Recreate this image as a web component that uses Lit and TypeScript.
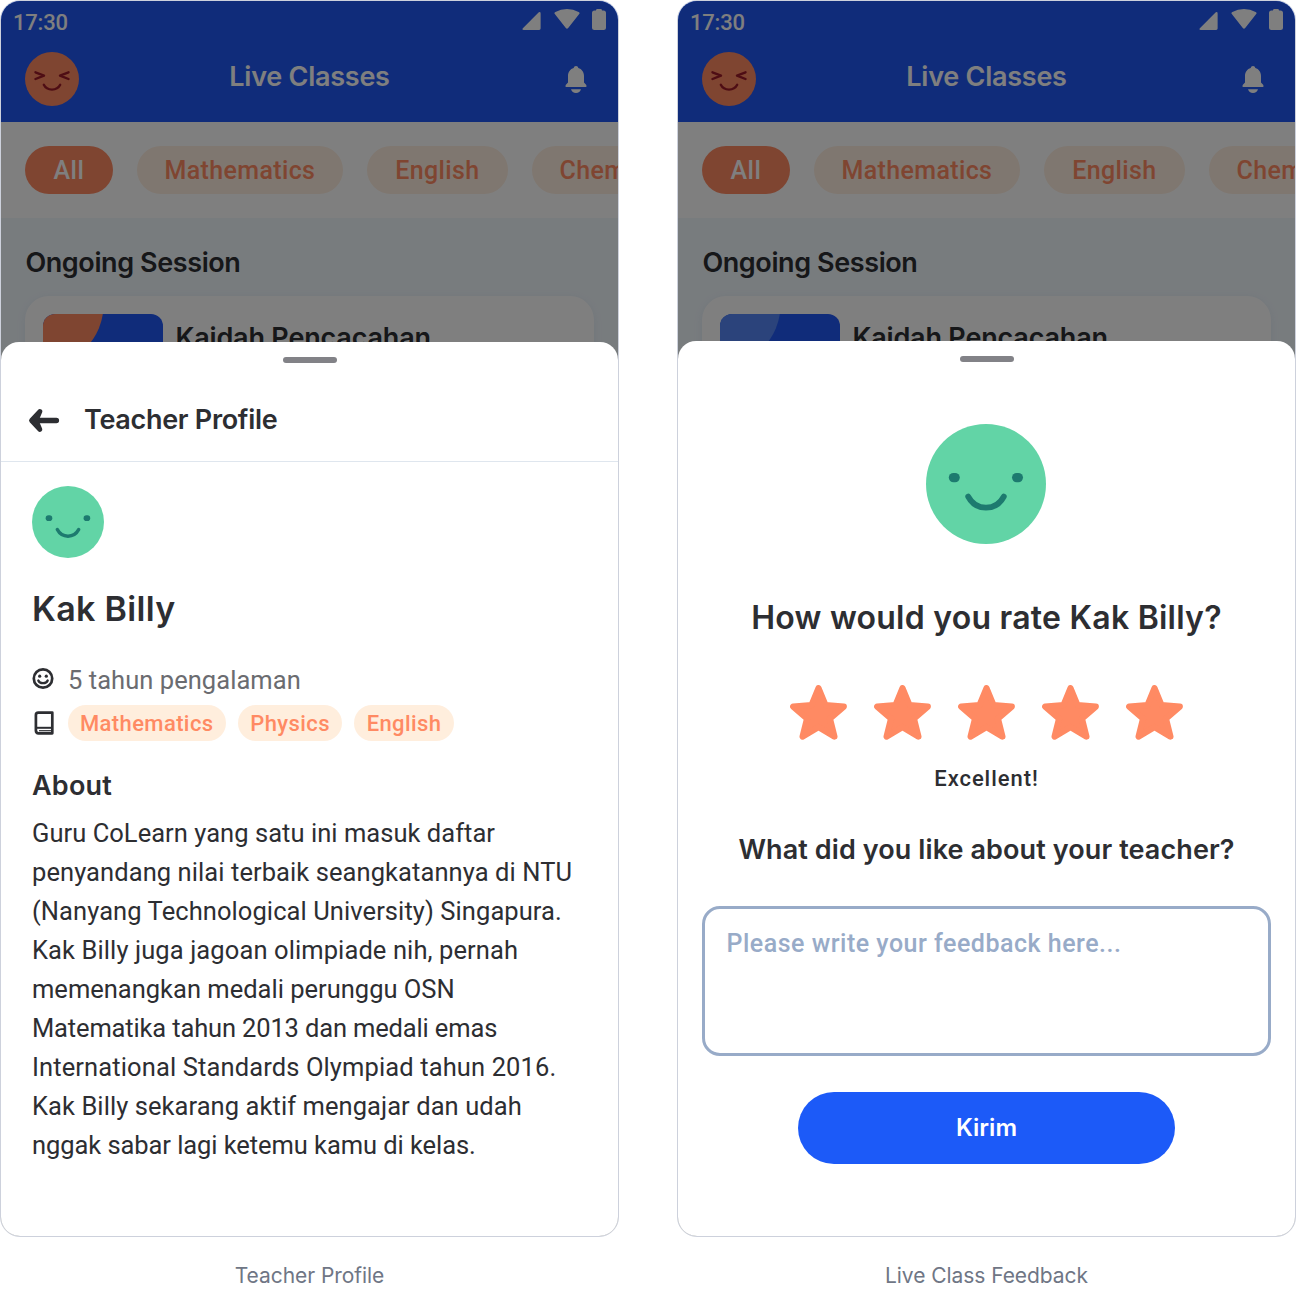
import { LitElement, html, css } from "lit";
import { customElement, property } from "lit/decorators.js";
import { classMap } from "lit/directives/class-map.js";
import { styleMap } from "lit/directives/style-map.js";

const happyFace = html`<svg class="face" viewBox="0 0 120 120">
  <circle cx="60" cy="60" r="60" fill="#62d4a6" />
  <rect x="22.8" y="48.9" width="11" height="9.4" rx="4.7" fill="#1d7a6f" />
  <rect x="86" y="48.9" width="11" height="9.4" rx="4.7" fill="#1d7a6f" />
  <path d="M42.2 72.6C50 87.4 70 87.4 77.8 72.6" fill="none" stroke="#1d7a6f" stroke-width="5.8" stroke-linecap="round" />
</svg>`;

const star = html`<svg class="star" viewBox="0 0 57 55">
  <path d="M28.5 3.2L35.5 20.1L53.8 21.6L39.9 33.6L44.4 51.6L28.5 42L12.6 51.6L17.1 33.6L3.2 21.6L21.5 20.1Z"
    fill="#ff8a63" stroke="#ff8a63" stroke-width="6.2" stroke-linejoin="round" />
</svg>`;

/** The dimmed class list that lies under both sheets. */
@customElement("class-list")
export class ClassList extends LitElement {
  @property() accent = "orange";

  static styles = css`
    :host { display: block; height: 100%; background: #f1f8fd; color: #2d2e32; font-family: Inter, sans-serif; }
    svg { display: block; }
    .top { background: #2058f4; color: #fff; height: 120.5px; }
    .status { height: 43px; display: flex; justify-content: space-between; padding: 0 12px; box-sizing: border-box; }
    .time { font: 500 22px/43px Roboto, sans-serif; letter-spacing: -0.2px; }
    .signals { display: flex; gap: 12.5px; margin-top: 8.4px; }
    .bar { display: grid; grid-template-columns: 1fr auto 1fr; align-items: start; padding: 0 24.4px; }
    .avatar { width: 54px; height: 54px; margin-top: 8.4px; }
    .heading { font-size: 27px; line-height: 34px; font-weight: 600; letter-spacing: -0.25px; margin-top: 16px; }
    .bell { justify-self: end; margin: 22px 7px 0 0; }
    .filters { display: flex; gap: 24px; padding: 24px 24.4px; background: #fff; overflow: hidden; }
    .pill {
      flex: none; height: 48px; border-radius: 24px; padding: 0 28px; background: #ffeee0; color: #ff8a63;
      font: 500 25px/49px Roboto, sans-serif; letter-spacing: 0.36px;
    }
    .pill.on { background: #ff8a63; color: #fff; letter-spacing: 0.6px; }
    .session { padding: 28.5px 24.4px 0; }
    .label { font-size: 27px; line-height: 34px; font-weight: 600; letter-spacing: -0.4px; }
    .card {
      display: flex; gap: 12px; margin-top: 15.5px; padding: 18px; height: 160px; border-radius: 24px;
      background: #fff; box-shadow: 0 2px 8px rgba(120, 150, 190, 0.12);
    }
    .thumb { width: 120px; height: 120px; border-radius: 12px; overflow: hidden; background: #2058f4; }
    .title { font-size: 27px; line-height: 34px; font-weight: 600; letter-spacing: -0.18px; margin-top: 7px; }
  `;

  render() {
    const pills = ["All", "Mathematics", "English", "Chemistry"];
    return html`
      <div class="top">
        <div class="status">
          <span class="time">17:30</span>
          <div class="signals">
            <svg width="19" height="22" viewBox="0 0 19 22"><path d="M16.8 3.2Q18.6 2.4 18.6 4.4V19.6Q18.6 21 17.2 21H1.8Q-.4 21 .9 19.2Z" fill="#fff" /></svg>
            <svg width="26" height="22" viewBox="0 0 26 22"><path d="M1 5.2Q-.3 4 1.4 3.1Q6.7 0 13 0T24.6 3.1Q26.3 4 25 5.2L14.2 19Q13 20.4 11.8 19Z" fill="#fff" /></svg>
            <svg width="14" height="22" viewBox="0 0 14 22"><path d="M4 1.4Q4 0 5.4 0H8.6Q10 0 10 1.4H11.5Q14 1.4 14 3.9V18.5Q14 21 11.5 21H2.5Q0 21 0 18.5V3.9Q0 1.4 2.5 1.4Z" fill="#fff" /></svg>
          </div>
        </div>
        <div class="bar">
          <svg class="avatar" viewBox="0 0 54 54">
            <circle cx="27" cy="27" r="27" fill="#ff8a63" />
            <g fill="none" stroke="#9c1a28" stroke-width="2.4" stroke-linecap="round" stroke-linejoin="round">
              <path d="M10.5 20.3L19 23.6L10.5 27M43.5 20.3L35 23.6L43.5 27" />
              <path d="M18.8 32.8C22 39.2 32 39.2 35.2 32.8" />
            </g>
          </svg>
          <span class="heading">Live Classes</span>
          <svg class="bell" width="22" height="28" viewBox="0 0 22 28">
            <path d="M11 0C12.3 0 13.1 .9 13.3 2C16.8 3 19 6 19 10V16.5L21.3 19Q22 21 21 21H1Q0 21 .7 19L3 16.5V10C3 6 5.2 3 8.7 2C8.9 .9 9.7 0 11 0ZM6 23.2H16C15.4 25.6 13.5 27 11 27S6.6 25.6 6 23.2Z" fill="#fff" />
          </svg>
        </div>
      </div>
      <div class="filters">
        ${pills.map((name, i) => html`<span class=${classMap({ pill: true, on: i === 0 })}>${name}</span>`)}
      </div>
      <div class="session">
        <div class="label">Ongoing Session</div>
        <div class="card">
          <svg class="thumb" viewBox="0 0 120 120">
            <circle cx="0" cy="-9" r="60.5" fill=${this.accent === "orange" ? "#ff8a63" : "#5687f6"} />
          </svg>
          <span class="title">Kaidah Pencacahan</span>
        </div>
      </div>
    `;
  }
}

/** A phone frame with the class list, a scrim and a bottom sheet for slotted content. */
@customElement("phone-frame")
export class PhoneFrame extends LitElement {
  @property() accent = "orange";
  @property() caption = "";
  @property({ type: Boolean, reflect: true }) tall = false;

  static styles = css`
    :host { display: block; width: 619px; }
    .phone {
      position: relative; box-sizing: border-box; height: 1237px; border: 1px solid #cdd1dc;
      border-radius: 20px; overflow: hidden; background: #fff;
    }
    .scrim { position: absolute; inset: 0; background: rgba(0, 0, 0, 0.5); }
    .sheet { position: absolute; inset: 341px 0 0; background: #fff; border-radius: 18px 18px 0 0; overflow: hidden; }
    :host([tall]) .sheet { top: 339.5px; }
    .handle { width: 54px; height: 6px; border-radius: 3px; background: #828287; margin: 15px auto 0; }
    .caption {
      margin-top: 24px; text-align: center; font: 400 21px/30px Inter, sans-serif; letter-spacing: -0.06px; color: #6f7685;
    }
  `;

  render() {
    return html`
      <div class="phone">
        <class-list accent=${this.accent}></class-list>
        <div class="scrim"></div>
        <div class="sheet"><div class="handle"></div><slot></slot></div>
      </div>
      <div class="caption">${this.caption}</div>
    `;
  }
}

@customElement("teacher-profile")
export class TeacherProfile extends LitElement {
  static styles = css`
    :host { display: block; color: #2d2e32; font-family: Inter, sans-serif; }
    svg { display: block; }
    .bar {
      display: flex; gap: 24px; box-sizing: border-box; height: 99px; padding: 40.4px 27px 0;
      border-bottom: 1px solid #dfe6ee;
    }
    .back { margin-top: 4.3px; }
    .heading { font-size: 27px; line-height: 34px; font-weight: 600; letter-spacing: -0.3px; }
    .body { padding: 24px 20px 0 31px; }
    .face { width: 72px; height: 72px; margin-left: -0.5px; }
    .name { margin-top: 29.3px; font-size: 34px; line-height: 44px; font-weight: 600; letter-spacing: 0.3px; }
    .row { display: flex; align-items: center; gap: 12px; height: 36px; margin: 7px 0 0 -0.5px; }
    .row.first { margin-top: 31px; }
    .icon { width: 24px; height: 26px; }
    .years { font: 400 25.5px/36px Roboto, sans-serif; letter-spacing: 0.05px; color: #6b6c70; margin-left: 0.5px; }
    .tag {
      height: 36px; border-radius: 18px; padding: 0 12.4px; background: #ffeedd; color: #ff8a63;
      font: 500 22px/37px Roboto, sans-serif; letter-spacing: 0.4px;
    }
    .label { margin-top: 28px; font-size: 27px; line-height: 34px; font-weight: 600; letter-spacing: 0.2px; }
    .about { margin-top: 11px; font: 400 25.5px/39px Roboto, sans-serif; }
    .line { white-space: nowrap; }
  `;

  render() {
    // Each line of the biography with its tracking in pixels.
    const about: [string, number][] = [
      ["Guru CoLearn yang satu ini masuk daftar", 0.04],
      ["penyandang nilai terbaik seangkatannya di NTU", 0.08],
      ["(Nanyang Technological University) Singapura.", 0.08],
      ["Kak Billy juga jagoan olimpiade nih, pernah", 0.1],
      ["memenangkan medali perunggu OSN", 0],
      ["Matematika tahun 2013 dan medali emas", -0.15],
      ["International Standards Olympiad tahun 2016.", 0.12],
      ["Kak Billy sekarang aktif mengajar dan udah", 0.07],
      ["nggak sabar lagi ketemu kamu di kelas.", -0.07],
    ];
    return html`
      <div class="bar">
        <svg class="back" width="32" height="25" viewBox="0 0 32 25" fill="none" stroke="#2d2e32" stroke-linejoin="round" stroke-linecap="round">
          <path d="M28.4 12.5H5" stroke-width="5.4" />
          <path d="M11.8 3.6L3.6 12.5L11.8 21.4L8 12.500Z" fill="#2d2e32" stroke-width="5" />
        </svg>
        <span class="heading">Teacher Profile</span>
      </div>
      <div class="body">
        ${happyFace}
        <div class="name">Kak Billy</div>
        <div class="row first">
          <svg class="icon" viewBox="0 0 24 26" fill="none" stroke="#2d2e32">
            <circle cx="11" cy="11.500" r="9.2" stroke-width="2.700" />
            <path d="M6.300 13.500C7.700 17.100 14.300 17.100 15.700 13.500" stroke-width="2.300" stroke-linecap="round" />
            <circle cx="7.700" cy="9.200" r="1.600" fill="#2d2e32" stroke="none" />
            <circle cx="14.300" cy="9.200" r="1.600" fill="#2d2e32" stroke="none" />
          </svg>
          <span class="years">5 tahun pengalaman</span>
        </div>
        <div class="row">
          <svg class="icon" viewBox="0 0 24 26" fill="none" stroke="#2d2e32" stroke-linejoin="round">
            <path d="M20.300 16.500V2.600H6.300Q3.900 2.600 3.900 5V20.500Q3.900 23.300 6.500 23.300H20.300V16.500" stroke-width="2.700" />
            <path d="M5 17.800H20" stroke-width="2" />
            <path d="M7 20.700H19.500" stroke-width="1.200" />
          </svg>
          <span class="tag">Mathematics</span><span class="tag">Physics</span><span class="tag">English</span>
        </div>
        <div class="label">About</div>
        <div class="about">
          ${about.map(([text, tracking]) => html`<div class="line" style=${styleMap({ letterSpacing: `${tracking}px` })}>${text}</div>`)}
        </div>
      </div>
    `;
  }
}

@customElement("class-feedback")
export class ClassFeedback extends LitElement {
  static styles = css`
    :host { display: flex; flex-direction: column; align-items: center; color: #2d2e32; font-family: Inter, sans-serif; font-weight: 600; }
    svg { display: block; }
    .face { width: 120px; height: 120px; margin: 62.9px 1px 0 0; }
    .rate { margin-top: 51.6px; font-size: 32px; line-height: 44px; letter-spacing: 0.24px; }
    .stars { display: flex; gap: 27px; margin-top: 45px; }
    .star { width: 57px; height: 55px; }
    .verdict { margin-top: 24.5px; font: 500 22px/30px Roboto, sans-serif; letter-spacing: 0.95px; }
    .ask { margin-top: 38.3px; font-size: 27px; line-height: 34px; letter-spacing: 0.1px; }
    .input {
      box-sizing: border-box; align-self: stretch; height: 150px; margin: 39.1px 24px 0; padding: 18px 21.5px;
      border: 3px solid #98abc8; border-radius: 18px; color: #98abc8;
      font: 500 25px/34px Roboto, sans-serif; letter-spacing: 0.5px;
    }
    .send {
      margin-top: 36px; width: 376.5px; height: 72px; border-radius: 36px; background: #1c5af8; color: #fff;
      font-size: 24px; line-height: 71px; text-align: center;
    }
  `;

  render() {
    return html`
      ${happyFace}
      <div class="rate">How would you rate Kak Billy?</div>
      <div class="stars">${[1, 2, 3, 4, 5].map(() => star)}</div>
      <div class="verdict">Excellent!</div>
      <div class="ask">What did you like about your teacher?</div>
      <div class="input">Please write your feedback here...</div>
      <div class="send">Kirim</div>
    `;
  }
}

@customElement("app-root")
export class AppRoot extends LitElement {
  static styles = css`
    :host { display: flex; gap: 58px; height: 1291px; background: #fff; overflow: hidden; }
  `;

  render() {
    return html`
      <phone-frame accent="orange" caption="Teacher Profile"><teacher-profile></teacher-profile></phone-frame>
      <phone-frame accent="blue" caption="Live Class Feedback" tall><class-feedback></class-feedback></phone-frame>
    `;
  }
}
